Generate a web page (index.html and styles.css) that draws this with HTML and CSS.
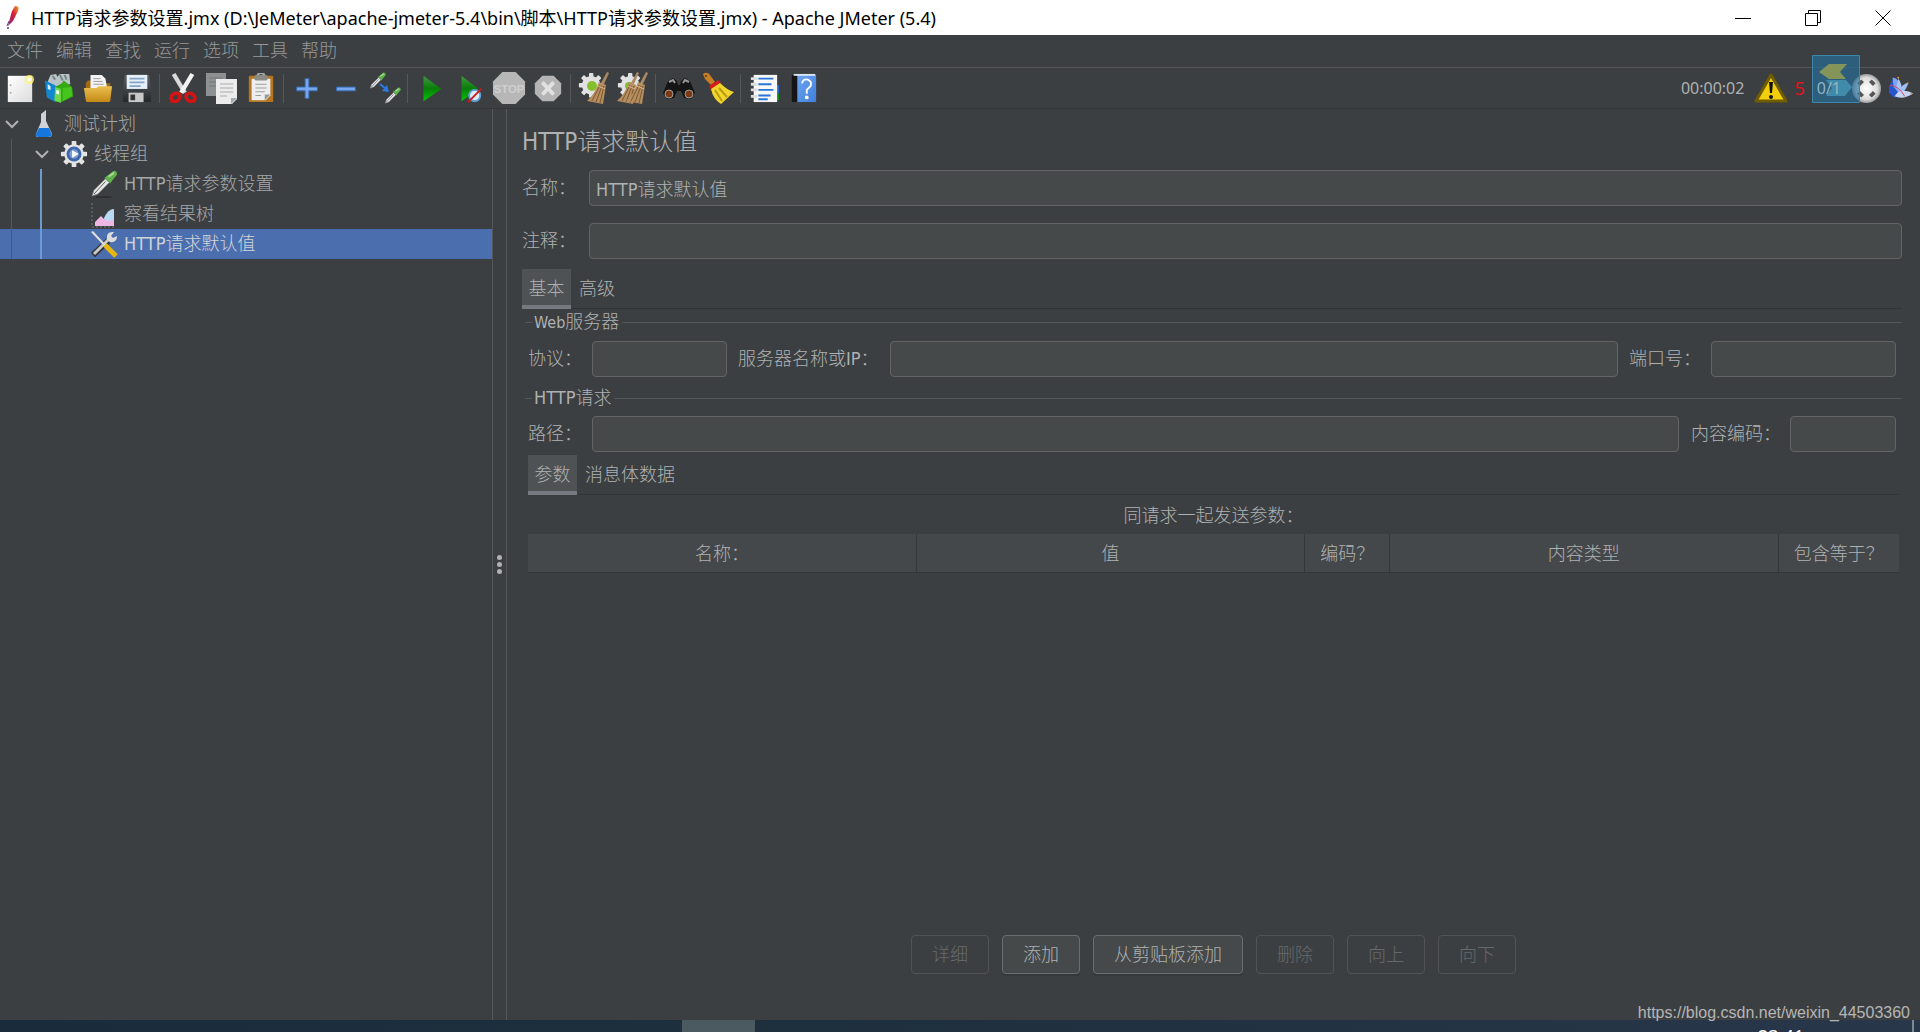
FILE: index.html
```html
<!DOCTYPE html>
<html lang="zh-CN">
<head>
<meta charset="utf-8">
<title>HTTP请求参数设置.jmx - Apache JMeter (5.4)</title>
<link rel="stylesheet" href="styles.css">
</head>
<body>
<svg width="0" height="0" class="defs" aria-hidden="true">
  <defs>
    <linearGradient id="paper" x1="0" y1="0" x2="1" y2="1"><stop offset="0" stop-color="#fff"/><stop offset="1" stop-color="#dcdcdc"/></linearGradient>
    <linearGradient id="gold" x1="0" y1="0" x2="0" y2="1"><stop offset="0" stop-color="#ecc055"/><stop offset="1" stop-color="#c48912"/></linearGradient>
    <linearGradient id="green" x1="0" y1="0" x2="0" y2="1"><stop offset="0" stop-color="#3f9a3f"/><stop offset=".5" stop-color="#0a7d0a"/><stop offset="1" stop-color="#02c802"/></linearGradient>
    <linearGradient id="disk" x1="0" y1="0" x2="0" y2="1"><stop offset="0" stop-color="#5d6268"/><stop offset="1" stop-color="#24272b"/></linearGradient>
    <linearGradient id="book" x1="0" y1="0" x2="1" y2="1"><stop offset="0" stop-color="#6ea5f0"/><stop offset="1" stop-color="#3f7fdc"/></linearGradient>
    <linearGradient id="feather" x1="0" y1="0" x2="1" y2="0"><stop offset="0" stop-color="#1c49c8"/><stop offset="1" stop-color="#b9cff5"/></linearGradient>
    <linearGradient id="quill" x1="1" y1="0" x2="0" y2="1"><stop offset="0" stop-color="#f79a1f"/><stop offset=".45" stop-color="#d2203a"/><stop offset="1" stop-color="#7a2a83"/></linearGradient>
    <radialGradient id="ball"><stop offset="0" stop-color="#fff"/><stop offset=".75" stop-color="#dcdcdc"/><stop offset="1" stop-color="#9a9a9a"/></radialGradient>
    <g id="cog"><circle cx="15" cy="15" r="10.500"/><g><rect x="12.500" y="1" width="5" height="28" rx="1"/><rect x="1" y="12.500" width="28" height="5" rx="1"/></g><g transform="rotate(45 15 15)"><rect x="12.500" y="1" width="5" height="28" rx="1"/><rect x="1" y="12.500" width="28" height="5" rx="1"/></g></g>
    <g id="straw"><path d="M29 0 31 1 26 12 23 11Z" fill="#a98a68"/><path d="M21 10 28 13 25 32 9 29Q17 22 21 10Z" fill="#b58d5e"/><path d="M22 13 14 29M24 14 18 30M26 14 22 31" stroke="#7c5832" fill="none"/><path d="M20 14 27 17" stroke="#d8b78d"/></g>
    <g id="dropper"><path d="M2 27 4 21 16 9 20 13 8 25Z" fill="#e8e8e8" stroke="#777"/><path d="M4 25 16 12" stroke="#555"/><path d="M15 8 18 6 24 1Q28 0 28 5L23 11 21 14Z" fill="#62b04c"/><path d="M19 7 25 3" stroke="#a6dc90" stroke-width="2"/></g>
  </defs>
</svg>

<header class="titlebar">
  <svg class="app-icon" viewBox="0 0 14 24"><path d="M9 0Q14 0 12 5L7 15 2 20 4 12 6 5Z" fill="url(#quill)"/><path d="M3 15 1 20" stroke="#7a2a83"/><circle cx="2" cy="22" r="1" fill="#4b3fa0"/></svg>
  <h1 class="window-title">HTTP请求参数设置.jmx (D:\JeMeter\apache-jmeter-5.4\bin\脚本\HTTP请求参数设置.jmx) - Apache JMeter (5.4)</h1>
  <div class="window-controls">
    <button aria-label="最小化"><svg viewBox="0 0 16 16"><path d="M0 8.500H16"/></svg></button>
    <button aria-label="还原"><svg viewBox="0 0 16 16"><path d="M.5 3.500H12.500V15.500H.5ZM3.500 3.500V.5H15.500V12.500H12.500"/></svg></button>
    <button aria-label="关闭"><svg viewBox="0 0 16 16"><path d="M.5.5 15.500 15.500M15.500.5.5 15.500"/></svg></button>
  </div>
</header>

<nav class="menubar">
  <button>文件</button><button>编辑</button><button>查找</button><button>运行</button><button>选项</button><button>工具</button><button>帮助</button>
</nav>

<div class="toolbar">
  <button aria-label="新建"><svg viewBox="0 0 32 32"><path d="M3 3H29V31H3Z" fill="url(#paper)"/><g fill="#aaa"><circle cx="6" cy="13" r="1"/><circle cx="6" cy="21" r="1"/></g><circle cx="26" cy="7" r="5" fill="#fff27a" opacity=".8"/><circle cx="26" cy="7" r="2" fill="#fff"/></svg></button>
  <button aria-label="模板"><svg viewBox="0 0 32 32"><path d="M4 9 7 2 13 1 14 4 17 1 27 1 28 12 8 15Z" fill="#b9c4c7"/><path d="M9 3 12 7M17 2 20 8M22 2 24 7" stroke="#758489" stroke-width="2"/><path d="M1 8 12 13V31L3 26Z" fill="#1287cf"/><path d="M4 12 7 14V18L4 17Z" fill="#d6efff"/><path d="M12 15 19 11 21 8 30 15 31 25 19 31 12 31Z" fill="#35a912"/><path d="M12 15 18 17V32L11 29Z" fill="#70d84d"/><path d="M13 18 16 19V23L13 22Z" fill="#efffe7"/><path d="M20 16 29 15 30 24 20 30Z" fill="#45c61d"/></svg></button>
  <button aria-label="打开"><svg viewBox="0 0 32 32"><path d="M3 11 5 8H12L14 11H29V24H3Z" fill="#a56b10"/><path d="M8 2H20L24 6 26 18H8Z" fill="#f4f4f4"/><path d="M11 6H19M11 9H21M11 12H22" stroke="#999"/><path d="M1 16H14L17 14H31L29 30Q28 31 26 31H5Q3 31 3 29Z" fill="url(#gold)"/></svg></button>
  <button aria-label="保存"><svg viewBox="0 0 32 32"><path d="M3 2H29L31 18V31H1V18Z" fill="url(#disk)"/><path d="M5 2H27V17H5Z" fill="#e7f0f8"/><path d="M8 6H24M8 10H24M8 14H20" stroke="#86a5c5" stroke-width="2"/><path d="M7 21H23V31H7Z" fill="#c8c8c8"/><path d="M9 23H14V29H9Z" fill="#333"/></svg></button>
  <i class="sep"></i>
  <button aria-label="剪切"><svg viewBox="0 0 32 32"><path d="M4 2 8 0 20 20 16 22Z" fill="#d9d9d9"/><path d="M28 2 24 0 12 20 16 22Z" fill="#f2f2f2"/><g fill="none" stroke="#d31414" stroke-width="4"><ellipse cx="8" cy="26" rx="5" ry="4" transform="rotate(-35 8 26)"/><ellipse cx="24" cy="26" rx="5" ry="4" transform="rotate(35 24 26)"/></g></svg></button>
  <button aria-label="复制"><svg viewBox="0 0 32 32" class="wide"><path d="M0 1H20V24H0Z" fill="#8e9091"/><path d="M3 6H17M3 10H17M3 14H12" stroke="#777"/><path d="M10 7H31V27L26 32H10Z" fill="#ececec"/><path d="M14 12H27M14 16H27M14 20H27M14 24H21" stroke="#aaa"/><path d="M31 26 25 26V32Z" fill="#aaa"/></svg></button>
  <button aria-label="粘贴"><svg viewBox="0 0 32 32"><rect x="3" y="3" width="26" height="28" rx="1" fill="#b47620"/><path d="M6 6H26V24L21 29H6Z" fill="#eee"/><rect x="9" y="2" width="14" height="6" rx="2" fill="#8b8c86"/><path d="M12 2Q16-2 20 2" fill="none" stroke="#aaa" stroke-width="2"/><path d="M10 12H22M10 16H22M10 20H20M10 24H16" stroke="#999"/><path d="M26 23 20 23V29Z" fill="#999"/></svg></button>
  <i class="sep"></i>
  <button aria-label="展开"><svg viewBox="0 0 32 32"><path d="M14 6H18V15H27V19H18V27H14V19H5V15H14Z" fill="#76a8ee" stroke="#3a6db9"/></svg></button>
  <button aria-label="折叠"><svg viewBox="0 0 32 32"><path d="M6 15H26V19H6Z" fill="#76a8ee" stroke="#3a6db9"/></svg></button>
  <button aria-label="切换"><svg viewBox="0 0 32 32" class="wide"><use href="#dropper" transform="scale(.6)"/><use href="#dropper" transform="translate(15 15) scale(.6)"/><path d="M11 12 18 18" stroke="#2b7be0" stroke-width="2"/><path d="M20 20 18 13 13 19Z" fill="#2b7be0"/></svg></button>
  <i class="sep"></i>
  <button aria-label="启动"><svg viewBox="0 0 32 32"><path d="M8 3 27 17 8 30Z" fill="url(#green)"/></svg></button>
  <button aria-label="无间隔启动"><svg viewBox="0 0 32 32"><path d="M7 3 25 17 7 30Z" fill="url(#green)"/><circle cx="21" cy="24" r="6" fill="#dcebf7" stroke="#5e9dd0" stroke-width="2"/><path d="M14 31 28 17" stroke="#cf1b1b" stroke-width="2"/></svg></button>
  <button aria-label="停止" disabled><svg viewBox="0 0 36 36" class="big"><path d="M11 1H25L35 11V25L25 35H11L1 25V11Z" fill="#b7b7b7"/><text x="18" y="23" class="stop-text">STOP</text></svg></button>
  <button aria-label="关闭线程" disabled><svg viewBox="0 0 32 32"><path d="M10 3H22L30 11V22L22 30H10L2 22V11Z" fill="#b4b4b4"/><path d="M10 10 22 23M22 10 10 23" stroke="#e2e2e2" stroke-width="4"/></svg></button>
  <i class="sep"></i>
  <button aria-label="清除"><svg viewBox="0 0 32 32" class="wide"><use href="#cog" fill="#e2e2e2" transform="scale(.88)"/><circle cx="14" cy="14" r="5" fill="#85bf2e"/><use href="#straw"/></svg></button>
  <button aria-label="清除全部"><svg viewBox="0 0 32 32" class="wide"><use href="#cog" fill="#e2e2e2" transform="scale(.88)"/><circle cx="12" cy="14" r="4" fill="#85bf2e"/><use href="#straw" transform="translate(-9 0)"/><use href="#straw"/></svg></button>
  <i class="sep"></i>
  <button aria-label="查找"><svg viewBox="0 0 32 32" class="wide"><path d="M5 9 10 6 14 9 15 13H17L18 9 22 6 27 9 32 21 28 27 21 26 18 19H14L11 26 4 27 0 21Z" fill="#151515"/><path d="M6 10 10 8 12 11M20 11 22 8 26 10" stroke="#999" fill="none" stroke-width="2"/><circle cx="6" cy="22" r="4" fill="#7c3a12" stroke="#9b9b9b"/><circle cx="26" cy="22" r="4" fill="#7c3a12" stroke="#9b9b9b"/></svg></button>
  <button aria-label="重置查找"><svg viewBox="0 0 32 32" class="wide"><path d="M1 2Q5-1 8 3L13 10 9 13 3 7Z" fill="#c97f25"/><circle cx="4" cy="4" r="1" fill="#5a3810"/><path d="M7 14 16 8 19 11 9 18Z" fill="#d01d1d"/><path d="M9 17 18 11Q25 18 32 20L19 32Q11 27 9 17Z" fill="#f0d52a"/><path d="M13 18 20 29M17 16 25 25" stroke="#bd9a13" stroke-width="2"/></svg></button>
  <i class="sep"></i>
  <button aria-label="函数助手"><svg viewBox="0 0 32 32"><path d="M28 13H32V22H28Z" fill="#2467cf"/><path d="M28 22H32V29H28Z" fill="#128c12"/><path d="M5 2H30V31H5Z" fill="#f8f8f8"/><path d="M10 6H26M10 12H24M10 18H26M10 24H23M10 28H20" stroke="#2b75d6" stroke-width="2"/><path d="M2 6H9M2 12H9M2 18H9M2 25H9" stroke="#ddd" stroke-width="3"/></svg></button>
  <button aria-label="帮助"><svg viewBox="0 0 32 32"><path d="M4 2 10 1V31H4Z" fill="#151515"/><path d="M10 2H30V31H10Z" fill="url(#book)"/><path d="M6 2H29" stroke="#dbe7f5" stroke-width="2"/><path d="M15 11Q16 6 21 7 26 9 24 14L20 18V22" fill="none" stroke="#fff" stroke-width="2"/><circle cx="20" cy="26" r="2" fill="#fff"/></svg></button>

  <div class="status">
    <span class="elapsed">00:00:02</span>
    <svg viewBox="0 0 34 30" class="warn"><path d="M17 2 32 28H2Z" fill="#f3ce0b" stroke="#6f5d00" stroke-width="3" stroke-linejoin="round"/><path d="M15 9H19L18 20H16Z" fill="#111"/><circle cx="17" cy="24" r="2" fill="#111"/></svg>
    <span class="errors">5</span>
    <span class="threads">0/1</span>
    <svg viewBox="0 0 32 32" class="ball"><circle cx="16" cy="16" r="15" fill="url(#ball)"/><g stroke="#555" stroke-width="4"><path d="M8 12 12 8M20 8 24 12M24 20 20 24M12 24 8 20"/></g></svg>
    <svg viewBox="0 0 28 28" class="plume"><path d="M6 2Q12 6 13 15L13 24H6L1 19V13Z" fill="#2854cf"/><path d="M5 3Q11 3 13 12L12 20 6 13Z" fill="#7fa4ea"/><path d="M11 4Q16 9 14 20L9 14Z" fill="#a9c3f3"/><path d="M22 8Q20 16 13 22L11 17Q15 10 22 8Z" fill="#9fbdf2"/><path d="M27 20Q17 27 7 23L11 18Q20 15 27 20Z" fill="#c4d5f5"/><path d="M2 11Q12 12 18 23" fill="none" stroke="#d43c5b"/><g fill="#e79a3b"><circle cx="11" cy="3" r="1"/><circle cx="21" cy="9" r="1"/><circle cx="25" cy="20" r="1"/></g></svg>
    <svg viewBox="0 0 48 48" class="overlay"><path d="M.5.5H47.500V47.500H.5Z" fill="#256f9c" fill-opacity=".65" stroke="#3c86ad"/><path d="M7 17 17 9H35L28 17 34 24H17Z" fill="#8f9b55" fill-opacity=".9"/><path d="M14 25H34L40 32 33 41H14L20 33Z" fill="#4696b5" fill-opacity=".8"/></svg>
  </div>
</div>

<div class="workspace">
  <aside class="tree">
    <div class="row"><svg class="chev" viewBox="0 0 14 14"><path d="M1 4 7 10 13 4"/></svg><svg class="node" viewBox="0 0 28 28"><path d="M11 4 16 0V11L22 24Q22 27 19 27H8Q5 27 6 24L11 12Z" fill="#cdd3d8"/><path d="M9 18H19L22 25Q21 27 18 27H9Q5 27 6 24Z" fill="#1577dd"/></svg><span>测试计划</span></div>
    <div class="row lvl1"><svg class="chev" viewBox="0 0 14 14"><path d="M1 4 7 10 13 4"/></svg><svg class="node" viewBox="0 0 30 30"><use href="#cog" fill="#e4e4e4"/><circle cx="15" cy="15" r="8" fill="#3e66ab"/><circle cx="15" cy="15" r="5" fill="#7e9dd0"/><path d="M13 11 20 15 13 19Z" fill="#fff"/></svg><span>线程组</span></div>
    <div class="row lvl2"><svg class="node" viewBox="0 0 29 29"><use href="#dropper"/><path d="M6 28H22" stroke="#222"/></svg><span>HTTP请求参数设置</span></div>
    <div class="row lvl2"><svg class="node" viewBox="0 0 28 28"><path d="M2 3V27H26" fill="none" stroke="#777" stroke-dasharray="2"/><path d="M14 18Q18 9 24 9V26H15Z" fill="#b9d9f5"/><path d="M5 26V22L11 16 16 21 24 20V26Z" fill="#efb6e4"/></svg><span>察看结果树</span></div>
    <div class="row lvl2 selected"><svg class="node" viewBox="0 0 28 28"><path d="M3 25 18 11" stroke="#333" stroke-width="6"/><path d="M4 24 20 8" stroke="#c9c9c9" stroke-width="3"/><path d="M17 9Q16 1 24 2L21 6 23 8 27 6Q27 13 20 12Z" fill="#ddd"/><path d="M1 2 3 1 16 15 14 16Z" fill="#ddd"/><path d="M15 15 26 26" stroke="#e7b70e" stroke-width="5"/></svg><span>HTTP请求默认值</span></div>
    <i class="guide"></i><i class="guide active"></i>
  </aside>
  <div class="splitter"><i></i><i></i><i></i></div>

  <main class="panel">
    <h2>HTTP请求默认值</h2>
    <div class="field"><label for="name">名称：</label><input id="name" value="HTTP请求默认值"></div>
    <div class="field"><label for="comment">注释：</label><input id="comment"></div>
    <div class="tabs" role="tablist"><button role="tab" aria-selected="true">基本</button><button role="tab" aria-selected="false">高级</button></div>

    <fieldset>
      <legend><b>Web</b>服务器</legend>
      <div class="line">
        <label for="protocol" class="lead">协议：</label><input id="protocol" class="protocol">
        <label for="server" class="server-label">服务器名称或IP：</label><input id="server" class="grow">
        <label for="port" class="port-label">端口号：</label><input id="port" class="port">
      </div>
    </fieldset>
    <fieldset>
      <legend>HTTP请求</legend>
      <div class="line">
        <label for="path" class="lead">路径：</label><input id="path" class="grow">
        <label for="encoding" class="encoding-label">内容编码：</label><input id="encoding" class="encoding">
      </div>
    </fieldset>

    <section class="params">
      <div class="tabs" role="tablist"><button role="tab" aria-selected="true">参数</button><button role="tab" aria-selected="false">消息体数据</button></div>
      <table>
        <caption>同请求一起发送参数：</caption>
        <colgroup><col><col><col class="c-encode"><col><col class="c-equals"></colgroup>
        <thead><tr><th>名称：</th><th>值</th><th>编码？</th><th>内容类型</th><th>包含等于？</th></tr></thead>
      </table>
      <div class="actions">
        <button disabled>详细</button><button>添加</button><button class="clip">从剪贴板添加</button><button disabled>删除</button><button disabled>向上</button><button disabled>向下</button>
      </div>
    </section>
  </main>
</div>

<footer class="taskbar"><i class="task"></i><time>23:41</time><i class="edge"></i></footer>
<a class="watermark" href="https://blog.csdn.net/weixin_44503360">https://blog.csdn.net/weixin_44503360</a>
</body>
</html>
```
FILE: styles.css
```css
* { box-sizing: border-box; }

body {
  margin: 0;
  height: 100vh;
  display: flex;
  flex-direction: column;
  overflow: hidden;
  position: relative;
  background: #3c3f41;
  color: #afb1b2;
  font: 300 18px/24px "DejaVu Sans Condensed", "Noto Sans CJK SC", sans-serif;
}

button, input {
  font: inherit;
  color: inherit;
}

button {
  padding: 0;
  border: 0;
  background: none;
}

.defs { position: absolute; }

/* Title bar */
.titlebar {
  height: 35px;
  flex: none;
  display: flex;
  align-items: center;
  padding: 0 2px 0 6px;
  background: #fff;
  color: #000;
}
.app-icon { width: 14px; height: 24px; margin-right: 11px; }
.window-title {
  flex: 1;
  margin: 0;
  font: 400 18px/24px "Noto Sans", "Noto Sans CJK SC", sans-serif;
  white-space: nowrap;
}
.window-controls { display: flex; }
.window-controls button { width: 70px; height: 33px; display: grid; place-items: center; }
.window-controls svg { width: 16px; height: 16px; fill: none; stroke: #000; }

/* Menu bar */
.menubar {
  height: 33px;
  flex: none;
  display: flex;
  align-items: center;
  gap: 13px;
  padding-left: 7px;
  border-bottom: 1px solid #555555;
  color: #96999b;
}

/* Toolbar */
.toolbar {
  height: 41px;
  flex: none;
  display: flex;
  align-items: center;
  border-bottom: 1px solid #333537;
}
.toolbar button { width: 39px; height: 40px; display: grid; place-items: center; }
.toolbar button svg { width: 30px; height: 30px; }
.toolbar button svg.big { width: 34px; height: 34px; }
.toolbar button svg.wide { width: 32px; height: 32px; }
.stop-text { font: 700 12px "Liberation Sans", sans-serif; text-anchor: middle; fill: #cfcfcf; }
.sep { width: 1px; height: 29px; margin: 0 3px; background: #55585a; }
.status {
  margin-left: auto;
  padding-right: 6px;
  display: flex;
  align-items: center;
  position: relative;
  font-family: "Noto Sans", sans-serif;
  font-weight: 400;
}
.elapsed { margin-right: 10px; font-size: 16px; }
.warn { width: 34px; height: 30px; margin-right: 6px; }
.errors { margin-right: 12px; color: #e8101a; }
.threads { margin-right: 10px; font-size: 16px; color: #8fb3c6; position: relative; z-index: 1; }
.ball { width: 31px; height: 31px; margin-right: 6px; }
.plume { width: 26px; height: 26px; }
.overlay { position: absolute; right: 60px; bottom: 1px; width: 48px; height: 48px; }

/* Workspace */
.workspace { flex: 1; min-height: 0; display: flex; }
.tree { width: 492px; flex: none; position: relative; }
.row { height: 30px; display: flex; align-items: center; padding-left: 5px; color: #a5a7a8; }
.chev { width: 14px; height: 14px; margin-right: 11px; fill: none; stroke: #afb1b3; stroke-width: 2; }
.node { width: 28px; height: 28px; margin-right: 6px; }
.lvl1 { padding-left: 35px; }
.lvl2 { padding-left: 90px; }
.selected { background: #4b6eaf; color: #d0d4da; }
.guide { position: absolute; left: 11px; top: 30px; width: 1px; height: 120px; background: #55585a; }
.guide.active { left: 40px; top: 60px; width: 2px; height: 90px; background: #6b9bd2; }

.splitter {
  width: 15px;
  flex: none;
  display: flex;
  flex-direction: column;
  align-items: center;
  justify-content: center;
  gap: 2px;
  border: solid #55575a;
  border-width: 0 1px;
}
.splitter i { width: 5px; height: 5px; border-radius: 50%; background: #afb1b3; }

/* Editor panel */
.panel {
  flex: 1;
  min-width: 0;
  display: flex;
  flex-direction: column;
  padding: 16px 18px 46px 15px;
}
h2 { margin: 0 0 11px; font-size: 24px; line-height: 34px; font-weight: 300; }

input {
  min-width: 0;
  height: 36px;
  padding: 0 6px;
  border: 1px solid #646464;
  border-radius: 4px;
  background: #45494a;
}
.field { display: flex; align-items: center; margin-bottom: 17px; }
.field label { width: 67px; }
.field input { flex: 1; }

.tabs { display: flex; border-bottom: 1px solid #323537; }
.field + .tabs { margin-top: -7px; }
.tabs button { height: 40px; margin-bottom: -1px; padding: 0 8px; }
.tabs button[aria-selected="true"] {
  width: 49px;
  padding: 4px 0 0;
  background: #4e5254;
  border-bottom: 4px solid #747a80;
}

fieldset {
  min-width: 0;
  margin: 0 0 9px 3px;
  padding: 6px 6px 0 3px;
  border: 0 solid #55585a;
  border-top-width: 1px;
}
.tabs + fieldset { margin-top: 1px; }
legend { margin-left: 4px; padding: 0 3px 0 2px; }
legend b { font-size: 16px; }
.line { display: flex; align-items: center; }
.grow { flex: 1; }
.lead { width: 64px; }
.protocol { width: 135px; margin-right: 11px; }
.server-label { width: 152px; }
.port-label { width: 93px; padding-left: 11px; }
.port { width: 185px; }
.encoding-label { width: 111px; padding-left: 12px; }
.encoding { width: 106px; }

.params {
  flex: 1;
  display: flex;
  flex-direction: column;
  margin: -6px 3px 0 6px;
}
table { width: 100%; table-layout: fixed; border-collapse: collapse; }
caption { height: 39px; padding-top: 9px; }
th {
  height: 38px;
  padding: 2px 0 0;
  font-weight: 300;
  background: #45484a;
  border: solid #35383a;
  border-width: 0 1px 1px 0;
}
th:last-child { border-right: 0; }
.c-encode { width: 85px; }
.c-equals { width: 121px; }

.actions { margin-top: auto; display: flex; justify-content: center; gap: 13px; }
.actions button {
  width: 78px;
  height: 39px;
  border: 1px solid #6b6e70;
  border-radius: 4px;
  background: #45494a;
  box-shadow: 0 2px 1px #35383a;
}
.actions .clip { width: 150px; }
.actions button:disabled { border-color: #515354; background: none; box-shadow: none; color: #66696b; }

/* Desktop taskbar */
.taskbar {
  height: 12px;
  flex: none;
  display: flex;
  overflow: hidden;
  background: linear-gradient(90deg, #1a2c3b, #20303f 55%, #28374a);
  color: #fff;
}
.task { width: 73px; margin-left: 682px; background: #4b5960; }
time { margin: 4px 108px 0 auto; font-family: "Noto Sans", sans-serif; font-weight: 400; }
.edge { width: 2px; margin-right: 6px; background: #7d8894; }

.watermark {
  position: absolute;
  right: 10px;
  bottom: 8px;
  color: #b5b6b7;
  font: 16px/22px "Liberation Sans", Arial, sans-serif;
  text-decoration: none;
}
```
